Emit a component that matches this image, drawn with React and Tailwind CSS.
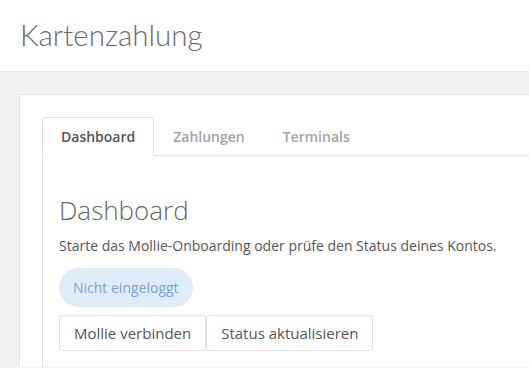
import { useState } from "react";

const tabs = ["Dashboard", "Zahlungen", "Terminals"];

export default function App() {
  const [active, setActive] = useState("Dashboard");

  return (
    <div
      className="min-h-screen bg-[#f2f2f2] text-[#555]"
      style={{ fontFamily: '"Open Sans", "Liberation Sans", sans-serif' }}
    >
      {/* Header */}
      <header className="h-[72px] bg-white border-b border-[#e3e3e3] flex items-center pl-5">
        <h1
          className="text-[29.5px] font-light text-[#6a6a6a] leading-none -mt-[2px]"
          style={{ fontFamily: 'Lato, "Open Sans", sans-serif' }}
        >
          Kartenzahlung
        </h1>
      </header>

      {/* Panel */}
      <div className="pt-[22px] pl-[19px]">
        <div className="bg-white border-t border-l border-[#e3e3e3] pt-[22px] pl-[22px]">
          {/* Tabs */}
          <nav className="flex border-b border-[#e0e0e0]">
            {tabs.map((t) => (
              <button
                key={t}
                onClick={() => setActive(t)}
                className={
                  t === active
                    ? "h-[39px] px-[18px] -mb-px bg-white border border-[#e0e0e0] border-b-white rounded-t-[4px] text-[14px] font-semibold text-[#555]"
                    : "h-[39px] px-[18px] -mb-px border border-transparent text-[14px] font-semibold text-[#a3a3a8]"
                }
              >
                {t}
              </button>
            ))}
          </nav>

          {/* Tab content */}
          <div className="border-l border-[#e0e0e0] pl-[16px] pt-[41px] pb-4">
            <h2 className="text-[26px] font-light text-[#666] leading-none">
              Dashboard
            </h2>
            <p className="mt-[12px] text-[14px] text-[#555]">
              Starte das Mollie-Onboarding oder prüfe den Status deines Kontos.
            </p>
            <div className="mt-[12px]">
              <span className="inline-flex items-center h-[39px] px-[14px] rounded-full bg-[#e0ebf8] text-[14px] text-[#7aa3d9]">
                Nicht eingeloggt
              </span>
            </div>
            <div className="mt-[8px] flex">
              <button className="h-[36px] px-[14px] bg-white border border-[#e0e0e0] rounded-[3px] text-[15px] text-[#555]">
                Mollie verbinden
              </button>
              <button className="h-[36px] px-[14px] bg-white border border-[#e0e0e0] rounded-[3px] text-[15px] text-[#555]">
                Status aktualisieren
              </button>
            </div>
          </div>
        </div>
      </div>
    </div>
  );
}
